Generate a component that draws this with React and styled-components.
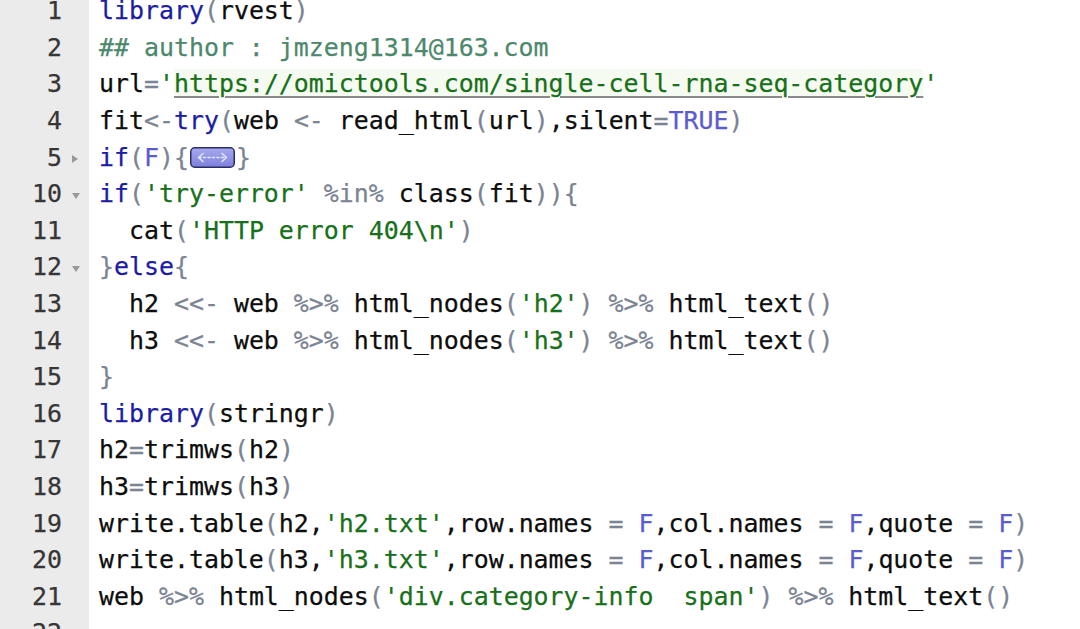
import React from 'react';
import styled, { createGlobalStyle } from 'styled-components';

const GlobalStyle = createGlobalStyle`
    html, body {
        margin: 0;
        padding: 0;
        background: #ffffff;
        overflow: hidden;
    }
`;

const LINE_H = '36.6px';

const palette = {
    kw: '#1c1ca6',
    id: '#0d0d0d',
    op: '#7b8493',
    str: '#17701a',
    url: '#17701a',
    const: '#5a5ccf',
    com: '#4c886b',
};

const Editor = styled.div`
    display: flex;
    align-items: stretch;
    min-height: calc(100vh + 8px);
    margin-top: -6.8px;
    font-family: "DejaVu Sans Mono", "Liberation Mono", monospace;
    font-size: 24.9px;
    line-height: ${LINE_H};
    -webkit-text-stroke: 0.25px currentColor;
`;

const Gutter = styled.div`
    width: 89px;
    flex: 0 0 89px;
    background: #ebebeb;
    color: #363636;
`;

const GutterRow = styled.div`
    display: grid;
    grid-template-columns: 62px 27px;
    height: ${LINE_H};
`;

const LineNo = styled.span`
    text-align: right;
`;

const FoldCell = styled.span`
    display: flex;
    align-items: center;
    justify-content: center;
    padding-top: 3px;
`;

// little triangles in the gutter, open (down) or closed (right)
const FoldArrow = styled.span`
    width: 0;
    height: 0;
    border-style: solid;
    border-color: transparent;
    ${(p) => p.$open
        ? `border-width: 6px 4.5px 0 4.5px; border-top-color: #999999;`
        : `border-width: 4.5px 0 4.5px 6px; border-left-color: #999999; margin-left: -2px;`}
`;

const Code = styled.div`
    flex: 1;
    padding-left: 10px;
`;

const CodeRow = styled.div`
    height: ${LINE_H};
    white-space: pre;
`;

const Tok = styled.span`
    color: ${(p) => palette[p.$kind] || palette.id};
    ${(p) => p.$kind === 'url' && `
        text-decoration: underline;
        text-decoration-color: #8a8a8a;
        text-decoration-thickness: 2px;
        text-underline-offset: 4px;
        background: #f6fbf1;
    `}
`;

const FoldBox = styled.span`
    display: inline-block;
    width: 45px;
    height: 21px;
    vertical-align: -2px;
    margin: 0 1px 0 1px;
    line-height: 0;
`;

const FoldPlaceholder = () => (
    <FoldBox>
        <svg width="45" height="21" viewBox="0 0 45 21">
            <defs>
                <linearGradient id="fb" x1="0" y1="0" x2="0" y2="1">
                    <stop offset="0" stopColor="#a7a9ef" />
                    <stop offset="1" stopColor="#7d80da" />
                </linearGradient>
            </defs>
            <rect x="0.75" y="0.75" width="43.5" height="19.5" rx="4" fill="url(#fb)" stroke="#2c2d66" strokeWidth="1.5" />
            <g fill="none" stroke="#e4e6ff" strokeWidth="1.6" strokeLinecap="round" strokeLinejoin="round">
                <path d="M9 10.5 H36" strokeDasharray="2 2.5" />
                <path d="M13 6.5 L8.5 10.5 L13 14.5" />
                <path d="M32 6.5 L36.5 10.5 L32 14.5" />
            </g>
        </svg>
    </FoldBox>
);

const lines = [
    { n: 1, toks: [['kw', 'library'], ['op', '('], ['id', 'rvest'], ['op', ')']] },
    { n: 2, toks: [['com', '## author : jmzeng1314@163.com']] },
    { n: 3, toks: [['id', 'url'], ['op', '='], ['str', "'"], ['url', 'https://omictools.com/single-cell-rna-seq-category'], ['str', "'"]] },
    { n: 4, toks: [['id', 'fit'], ['op', '<-'], ['kw', 'try'], ['op', '('], ['id', 'web '], ['op', '<-'], ['id', ' read_html'], ['op', '('], ['id', 'url'], ['op', ')'], ['id', ',silent'], ['op', '='], ['const', 'TRUE'], ['op', ')']] },
    { n: 5, fold: 'closed', toks: [['kw', 'if'], ['op', '('], ['const', 'F'], ['op', ')'], ['op', '{'], ['fold'], ['op', '}']] },
    { n: 10, fold: 'open', toks: [['kw', 'if'], ['op', '('], ['str', "'try-error'"], ['id', ' '], ['op', '%in%'], ['id', ' class'], ['op', '('], ['id', 'fit'], ['op', '))'], ['op', '{']] },
    { n: 11, toks: [['id', '  cat'], ['op', '('], ['str', "'HTTP error 404\\n'"], ['op', ')']] },
    { n: 12, fold: 'open', toks: [['op', '}'], ['kw', 'else'], ['op', '{']] },
    { n: 13, toks: [['id', '  h2 '], ['op', '<<-'], ['id', ' web '], ['op', '%>%'], ['id', ' html_nodes'], ['op', '('], ['str', "'h2'"], ['op', ')'], ['id', ' '], ['op', '%>%'], ['id', ' html_text'], ['op', '()']] },
    { n: 14, toks: [['id', '  h3 '], ['op', '<<-'], ['id', ' web '], ['op', '%>%'], ['id', ' html_nodes'], ['op', '('], ['str', "'h3'"], ['op', ')'], ['id', ' '], ['op', '%>%'], ['id', ' html_text'], ['op', '()']] },
    { n: 15, toks: [['op', '}']] },
    { n: 16, toks: [['kw', 'library'], ['op', '('], ['id', 'stringr'], ['op', ')']] },
    { n: 17, toks: [['id', 'h2'], ['op', '='], ['id', 'trimws'], ['op', '('], ['id', 'h2'], ['op', ')']] },
    { n: 18, toks: [['id', 'h3'], ['op', '='], ['id', 'trimws'], ['op', '('], ['id', 'h3'], ['op', ')']] },
    { n: 19, toks: [['id', 'write.table'], ['op', '('], ['id', 'h2,'], ['str', "'h2.txt'"], ['id', ',row.names '], ['op', '='], ['id', ' '], ['const', 'F'], ['id', ',col.names '], ['op', '='], ['id', ' '], ['const', 'F'], ['id', ',quote '], ['op', '='], ['id', ' '], ['const', 'F'], ['op', ')']] },
    { n: 20, toks: [['id', 'write.table'], ['op', '('], ['id', 'h3,'], ['str', "'h3.txt'"], ['id', ',row.names '], ['op', '='], ['id', ' '], ['const', 'F'], ['id', ',col.names '], ['op', '='], ['id', ' '], ['const', 'F'], ['id', ',quote '], ['op', '='], ['id', ' '], ['const', 'F'], ['op', ')']] },
    { n: 21, toks: [['id', 'web '], ['op', '%>%'], ['id', ' html_nodes'], ['op', '('], ['str', "'div.category-info  span'"], ['op', ')'], ['id', ' '], ['op', '%>%'], ['id', ' html_text'], ['op', '()']] },
    { n: 22, toks: [] },
];

const App = () => {
    return (
        <>
            <GlobalStyle />
            <Editor>
                <Gutter>
                    {lines.map((line) => (
                        <GutterRow key={line.n}>
                            <LineNo>{line.n}</LineNo>
                            <FoldCell>
                                {line.fold && <FoldArrow $open={line.fold === 'open'} />}
                            </FoldCell>
                        </GutterRow>
                    ))}
                </Gutter>
                <Code>
                    {lines.map((line) => (
                        <CodeRow key={line.n}>
                            {line.toks.map(([kind, text], i) =>
                                kind === 'fold'
                                    ? <FoldPlaceholder key={i} />
                                    : <Tok key={i} $kind={kind}>{text}</Tok>
                            )}
                        </CodeRow>
                    ))}
                </Code>
            </Editor>
        </>
    );
};

export default App;
